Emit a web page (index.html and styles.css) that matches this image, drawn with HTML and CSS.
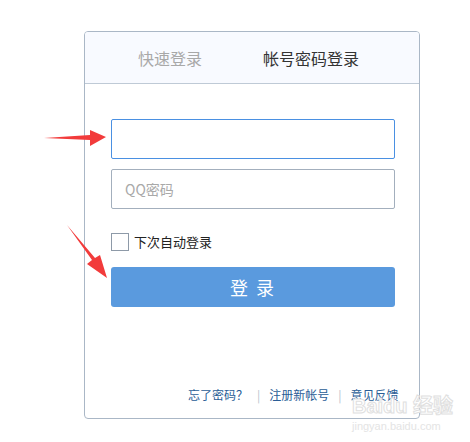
FILE: index.html
```html
<!DOCTYPE html>
<html lang="zh-CN">
<head>
    <meta charset="UTF-8">
    <meta name="viewport" content="width=device-width, initial-scale=1.0">
    <title>QQ登录</title>
    <link rel="stylesheet" href="styles.css">
</head>
<body>
    <div class="login">
        <div class="tabs">
            <span class="tab">快速登录</span>
            <span class="tab active">帐号密码登录</span>
        </div>
        <div class="form">
            <input class="field focused" type="text">
            <input class="field" type="password" placeholder="QQ密码">
            <label class="remember">
                <span class="box"></span>
                下次自动登录
            </label>
            <button class="submit">登 录</button>
        </div>
        <div class="links">
            <a href="#">忘了密码？</a>
            <span class="sep">|</span>
            <a href="#">注册新帐号</a>
            <span class="sep">|</span>
            <a href="#">意见反馈</a>
        </div>
    </div>

    <!-- red arrows drawn over the screenshot -->
    <svg class="arrow arrow-one" width="70" height="24" viewBox="0 0 70 24">
        <polygon points="0,12 46,9 46,4 62,11 46,20 46,14" fill="#f23b3b"/>
    </svg>
    <svg class="arrow arrow-two" width="50" height="60" viewBox="0 0 50 60">
        <polygon points="2,2 27,37 22,41 42,55 35,32 30,35" fill="#f23b3b"/>
    </svg>

    <div class="watermark">
        <span class="wm-logo">Baidu 经验</span>
        <span class="wm-url">jingyan.baidu.com</span>
    </div>
</body>
</html>
```

FILE: styles.css
```css
body{
    margin: 0;
    font-family: "Noto Sans CJK SC", "Noto Sans", sans-serif;
    background: #fff;
}
.login{
    box-sizing: border-box;
    width: 336px;
    height: 388px;
    margin: 31px 0 0 84px;
    border: 1px solid #aab7c6;
    border-radius: 4px;
    display: flex;
    flex-direction: column;
    overflow: hidden;
}
.tabs{
    height: 51px;
    background: #f8faff;
    border-bottom: 1px solid #bfcad6;
    display: flex;
    align-items: center;
    gap: 61px;
    padding-left: 53px;
}
.tab{
    font-size: 16px;
    color: #a8a8a8;
}
.tab.active{
    color: #333;
}
.form{
    display: flex;
    flex-direction: column;
    padding: 35px 24px 0 26px;
}
.field{
    box-sizing: border-box;
    height: 40px;
    border: 1px solid #a3afbd;
    border-radius: 2px;
    padding: 0 13px;
    font-size: 14px;
    font-family: inherit;
    outline: none;
}
.field + .field{
    margin-top: 10px;
}
.field.focused{
    border-color: #4a90e2;
}
.field::placeholder{
    color: #a9a9a9;
}
.remember{
    display: flex;
    align-items: center;
    gap: 5px;
    margin-top: 23px;
    font-size: 13px;
    color: #222;
}
.box{
    box-sizing: border-box;
    width: 18px;
    height: 18px;
    border: 1px solid #8e9aa8;
    background: #fff;
}
.submit{
    margin-top: 16px;
    height: 40px;
    border: none;
    border-radius: 3px;
    background: #5a9ade;
    color: #fff;
    font-size: 18px;
    font-family: inherit;
    letter-spacing: 2px;
}
.links{
    margin-top: auto;
    padding: 0 0 15px 103px;
    display: flex;
    gap: 9px;
    font-size: 12px;
}
.links a{
    color: #2a5d96;
    text-decoration: none;
}
.sep{
    color: #b8c2cc;
}
.arrow{
    position: absolute;
}
.arrow-one{
    left: 44px;
    top: 126px;
}
.arrow-two{
    left: 65px;
    top: 223px;
}
.watermark{
    position: absolute;
    left: 352px;
    top: 396px;
    display: flex;
    flex-direction: column;
    line-height: 1;
    white-space: nowrap;
    color: #fff;
    font-family: "Liberation Sans", "Noto Sans CJK SC", sans-serif;
    -webkit-text-stroke: 1px #e0e0e0;
}
.wm-logo{
    font-size: 20px;
    font-weight: bold;
}
.wm-url{
    font-size: 11px;
    margin-top: 5px;
    -webkit-text-stroke: 0;
    color: #e4e4e4;
}
```
